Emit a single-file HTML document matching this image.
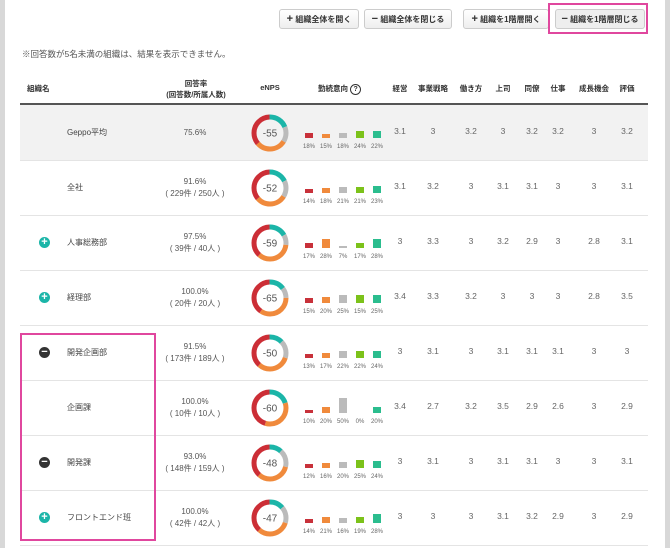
<!DOCTYPE html><html><head><meta charset="utf-8"><style>
body{margin:0;width:670px;height:548px;background:#fff;font-family:"Liberation Sans","Noto Sans CJK JP",sans-serif;color:#555;position:relative;overflow:hidden}
.strip{position:absolute;top:0;bottom:0;width:5px;background:#d8d8d8}
.btn{position:absolute;top:9px;height:18px;border:1px solid #ccc;border-radius:3px;background:linear-gradient(#fff,#eee);font-size:8px;font-weight:bold;color:#333;line-height:18px;text-align:center}
.btn b{font-size:11px}
.abs{position:absolute}
.hd{position:absolute;top:78px;font-size:7.5px;font-weight:bold;color:#333;text-align:center}
.row{position:absolute;left:20px;width:628px;height:55px;border-bottom:1px solid #e4e4e4}
.row>div{position:absolute}
.nm{left:47px;top:22px;font-size:8px;color:#444}
.rt{left:135px;width:80px;text-align:center;font-size:8px;color:#555;line-height:12px}
.dn{left:230px;top:8px}
.v{top:21px;font-size:8.5px;color:#666;text-align:center;width:30px}
.bars{left:281px;top:8px;width:90px;height:40px}
.bars span{position:absolute;width:8px;bottom:15px}
.bars i{position:absolute;bottom:3px;font-style:normal;font-size:6px;color:#666;width:16px;text-align:center}
.ic{left:19px;top:22px;width:11px;height:11px;border-radius:50%;color:#fff;font-size:11px;line-height:10px;text-align:center;font-weight:bold}
</style></head><body>
<div class="strip" style="left:0"></div><div class="strip" style="right:0"></div>
<div class="btn" style="left:279px;width:78px"><b>+</b> 組織全体を開く</div>
<div class="btn" style="left:364px;width:86px"><b>−</b> 組織全体を閉じる</div>
<div class="btn" style="left:463px;width:84px"><b>+</b> 組織を1階層開く</div>
<div class="btn" style="left:555px;width:88px;background:#eee"><b>−</b> 組織を1階層閉じる</div>
<div class="abs" style="left:548px;top:3px;width:100px;height:31px;border:2px solid #e0479e;box-sizing:border-box"></div>
<div class="abs" style="left:22px;top:48px;font-size:8.5px;color:#555">※回答数が5名未満の組織は、結果を表示できません。</div>
<div class="hd" style="left:27px;top:83px">組織名</div>
<div class="hd" style="left:165px;width:62px;line-height:11px">回答率<br>(回答数/所属人数)</div>
<div class="hd" style="left:255px;width:30px;top:83px">eNPS</div>
<div class="hd" style="left:318px;top:83px">勤続意向 <span style="display:inline-block;width:9px;height:9px;border:1px solid #333;border-radius:50%;line-height:9px;font-size:7px">?</span></div>
<div class="hd" style="left:385px;width:30px;top:83px">経営</div>
<div class="hd" style="left:413px;width:40px;top:83px">事業戦略</div>
<div class="hd" style="left:456px;width:30px;top:83px">働き方</div>
<div class="hd" style="left:488px;width:30px;top:83px">上司</div>
<div class="hd" style="left:517px;width:30px;top:83px">同僚</div>
<div class="hd" style="left:543px;width:30px;top:83px">仕事</div>
<div class="hd" style="left:574px;width:40px;top:83px">成長機会</div>
<div class="hd" style="left:612px;width:30px;top:83px">評価</div>
<div class="abs" style="left:20px;top:103px;width:628px;height:2px;background:#555"></div>

<!-- donut template via svg -->
<div class="row" style="top:105px;height:55px;background:#f2f2f2">
<div class="nm" style="top:22px">Geppo平均</div><div class="rt" style="top:22px">75.6%</div>
<div class="dn"><svg width="40" height="40" viewBox="0 0 40 40"><g transform="rotate(-90 20 20)" fill="none" stroke-width="5"><circle cx="20" cy="20" r="16" pathLength="100" stroke="#1bb5a8" stroke-dasharray="19 81"/><circle cx="20" cy="20" r="16" pathLength="100" stroke="#bbb" stroke-dasharray="0 19 15 66"/><circle cx="20" cy="20" r="16" pathLength="100" stroke="#f08a3c" stroke-dasharray="0 34 30 36"/><circle cx="20" cy="20" r="16" pathLength="100" stroke="#cc2e36" stroke-dasharray="0 64 36 0"/></g><text x="20" y="23.5" font-size="10" text-anchor="middle" fill="#555" font-family="Liberation Sans">-55</text></svg></div>
<div class="bars"><span style="left:4px;height:5px;background:#c8313a"></span><span style="left:21px;height:4px;background:#f08a3c"></span><span style="left:38px;height:5px;background:#bbb"></span><span style="left:55px;height:7px;background:#7cc21a"></span><span style="left:72px;height:7px;background:#2bbd8e"></span><i style="left:0">18%</i><i style="left:17px">15%</i><i style="left:34px">18%</i><i style="left:51px">24%</i><i style="left:68px">22%</i></div>
<div class="v" style="left:365px">3.1</div><div class="v" style="left:398px">3</div><div class="v" style="left:436px">3.2</div><div class="v" style="left:468px">3</div><div class="v" style="left:497px">3.2</div><div class="v" style="left:523px">3.2</div><div class="v" style="left:559px">3</div><div class="v" style="left:592px">3.2</div>
</div>

<div class="row" style="top:160px">
<div class="nm">全社</div><div class="rt" style="top:16px">91.6%<br>( 229件 / 250人 )</div>
<div class="dn"><svg width="40" height="40" viewBox="0 0 40 40"><g transform="rotate(-90 20 20)" fill="none" stroke-width="5"><circle cx="20" cy="20" r="16" pathLength="100" stroke="#1bb5a8" stroke-dasharray="18 82"/><circle cx="20" cy="20" r="16" pathLength="100" stroke="#bbb" stroke-dasharray="0 18 16 66"/><circle cx="20" cy="20" r="16" pathLength="100" stroke="#f08a3c" stroke-dasharray="0 34 30 36"/><circle cx="20" cy="20" r="16" pathLength="100" stroke="#cc2e36" stroke-dasharray="0 64 36 0"/></g><text x="20" y="23.5" font-size="10" text-anchor="middle" fill="#555" font-family="Liberation Sans">-52</text></svg></div>
<div class="bars"><span style="left:4px;height:4px;background:#c8313a"></span><span style="left:21px;height:5px;background:#f08a3c"></span><span style="left:38px;height:6px;background:#bbb"></span><span style="left:55px;height:6px;background:#7cc21a"></span><span style="left:72px;height:7px;background:#2bbd8e"></span><i style="left:0">14%</i><i style="left:17px">18%</i><i style="left:34px">21%</i><i style="left:51px">21%</i><i style="left:68px">23%</i></div>
<div class="v" style="left:365px">3.1</div><div class="v" style="left:398px">3.2</div><div class="v" style="left:436px">3</div><div class="v" style="left:468px">3.1</div><div class="v" style="left:497px">3.1</div><div class="v" style="left:523px">3</div><div class="v" style="left:559px">3</div><div class="v" style="left:592px">3.1</div>
</div>

<div class="row" style="top:215px">
<div class="ic" style="background:#1bb5a8">+</div><div class="nm">人事総務部</div><div class="rt" style="top:16px">97.5%<br>( 39件 / 40人 )</div>
<div class="dn"><svg width="40" height="40" viewBox="0 0 40 40"><g transform="rotate(-90 20 20)" fill="none" stroke-width="5"><circle cx="20" cy="20" r="16" pathLength="100" stroke="#1bb5a8" stroke-dasharray="17 83"/><circle cx="20" cy="20" r="16" pathLength="100" stroke="#bbb" stroke-dasharray="0 17 10 73"/><circle cx="20" cy="20" r="16" pathLength="100" stroke="#f08a3c" stroke-dasharray="0 27 35 38"/><circle cx="20" cy="20" r="16" pathLength="100" stroke="#cc2e36" stroke-dasharray="0 62 38 0"/></g><text x="20" y="23.5" font-size="10" text-anchor="middle" fill="#555" font-family="Liberation Sans">-59</text></svg></div>
<div class="bars"><span style="left:4px;height:5px;background:#c8313a"></span><span style="left:21px;height:9px;background:#f08a3c"></span><span style="left:38px;height:2px;background:#bbb"></span><span style="left:55px;height:5px;background:#7cc21a"></span><span style="left:72px;height:9px;background:#2bbd8e"></span><i style="left:0">17%</i><i style="left:17px">28%</i><i style="left:34px">7%</i><i style="left:51px">17%</i><i style="left:68px">28%</i></div>
<div class="v" style="left:365px">3</div><div class="v" style="left:398px">3.3</div><div class="v" style="left:436px">3</div><div class="v" style="left:468px">3.2</div><div class="v" style="left:497px">2.9</div><div class="v" style="left:523px">3</div><div class="v" style="left:559px">2.8</div><div class="v" style="left:592px">3.1</div>
</div>

<div class="row" style="top:270px">
<div class="ic" style="background:#1bb5a8">+</div><div class="nm">経理部</div><div class="rt" style="top:16px">100.0%<br>( 20件 / 20人 )</div>
<div class="dn"><svg width="40" height="40" viewBox="0 0 40 40"><g transform="rotate(-90 20 20)" fill="none" stroke-width="5"><circle cx="20" cy="20" r="16" pathLength="100" stroke="#1bb5a8" stroke-dasharray="15 85"/><circle cx="20" cy="20" r="16" pathLength="100" stroke="#bbb" stroke-dasharray="0 15 10 75"/><circle cx="20" cy="20" r="16" pathLength="100" stroke="#f08a3c" stroke-dasharray="0 25 35 40"/><circle cx="20" cy="20" r="16" pathLength="100" stroke="#cc2e36" stroke-dasharray="0 60 40 0"/></g><text x="20" y="23.5" font-size="10" text-anchor="middle" fill="#555" font-family="Liberation Sans">-65</text></svg></div>
<div class="bars"><span style="left:4px;height:5px;background:#c8313a"></span><span style="left:21px;height:6px;background:#f08a3c"></span><span style="left:38px;height:8px;background:#bbb"></span><span style="left:55px;height:8px;background:#7cc21a"></span><span style="left:72px;height:8px;background:#2bbd8e"></span><i style="left:0">15%</i><i style="left:17px">20%</i><i style="left:34px">25%</i><i style="left:51px">15%</i><i style="left:68px">25%</i></div>
<div class="v" style="left:365px">3.4</div><div class="v" style="left:398px">3.3</div><div class="v" style="left:436px">3.2</div><div class="v" style="left:468px">3</div><div class="v" style="left:497px">3</div><div class="v" style="left:523px">3</div><div class="v" style="left:559px">2.8</div><div class="v" style="left:592px">3.5</div>
</div>

<div class="row" style="top:325px">
<div class="ic" style="background:#333">−</div><div class="nm">開発企画部</div><div class="rt" style="top:16px">91.5%<br>( 173件 / 189人 )</div>
<div class="dn"><svg width="40" height="40" viewBox="0 0 40 40"><g transform="rotate(-90 20 20)" fill="none" stroke-width="5"><circle cx="20" cy="20" r="16" pathLength="100" stroke="#1bb5a8" stroke-dasharray="13 87"/><circle cx="20" cy="20" r="16" pathLength="100" stroke="#bbb" stroke-dasharray="0 13 17 70"/><circle cx="20" cy="20" r="16" pathLength="100" stroke="#f08a3c" stroke-dasharray="0 30 32 38"/><circle cx="20" cy="20" r="16" pathLength="100" stroke="#cc2e36" stroke-dasharray="0 62 38 0"/></g><text x="20" y="23.5" font-size="10" text-anchor="middle" fill="#555" font-family="Liberation Sans">-50</text></svg></div>
<div class="bars"><span style="left:4px;height:4px;background:#c8313a"></span><span style="left:21px;height:5px;background:#f08a3c"></span><span style="left:38px;height:7px;background:#bbb"></span><span style="left:55px;height:7px;background:#7cc21a"></span><span style="left:72px;height:7px;background:#2bbd8e"></span><i style="left:0">13%</i><i style="left:17px">17%</i><i style="left:34px">22%</i><i style="left:51px">22%</i><i style="left:68px">24%</i></div>
<div class="v" style="left:365px">3</div><div class="v" style="left:398px">3.1</div><div class="v" style="left:436px">3</div><div class="v" style="left:468px">3.1</div><div class="v" style="left:497px">3.1</div><div class="v" style="left:523px">3.1</div><div class="v" style="left:559px">3</div><div class="v" style="left:592px">3</div>
</div>

<div class="row" style="top:380px">
<div class="nm">企画課</div><div class="rt" style="top:16px">100.0%<br>( 10件 / 10人 )</div>
<div class="dn"><svg width="40" height="40" viewBox="0 0 40 40"><g transform="rotate(-90 20 20)" fill="none" stroke-width="5"><circle cx="20" cy="20" r="16" pathLength="100" stroke="#1bb5a8" stroke-dasharray="20 80"/><circle cx="20" cy="20" r="16" pathLength="100" stroke="#f08a3c" stroke-dasharray="0 20 35 45"/><circle cx="20" cy="20" r="16" pathLength="100" stroke="#cc2e36" stroke-dasharray="0 55 45 0"/></g><text x="20" y="23.5" font-size="10" text-anchor="middle" fill="#555" font-family="Liberation Sans">-60</text></svg></div>
<div class="bars"><span style="left:4px;height:3px;background:#c8313a"></span><span style="left:21px;height:6px;background:#f08a3c"></span><span style="left:38px;height:15px;background:#bbb"></span><span style="left:72px;height:6px;background:#2bbd8e"></span><i style="left:0">10%</i><i style="left:17px">20%</i><i style="left:34px">50%</i><i style="left:51px">0%</i><i style="left:68px">20%</i></div>
<div class="v" style="left:365px">3.4</div><div class="v" style="left:398px">2.7</div><div class="v" style="left:436px">3.2</div><div class="v" style="left:468px">3.5</div><div class="v" style="left:497px">2.9</div><div class="v" style="left:523px">2.6</div><div class="v" style="left:559px">3</div><div class="v" style="left:592px">2.9</div>
</div>

<div class="row" style="top:435px">
<div class="ic" style="background:#333">−</div><div class="nm">開発課</div><div class="rt" style="top:16px">93.0%<br>( 148件 / 159人 )</div>
<div class="dn"><svg width="40" height="40" viewBox="0 0 40 40"><g transform="rotate(-90 20 20)" fill="none" stroke-width="5"><circle cx="20" cy="20" r="16" pathLength="100" stroke="#1bb5a8" stroke-dasharray="12 88"/><circle cx="20" cy="20" r="16" pathLength="100" stroke="#bbb" stroke-dasharray="0 12 17 71"/><circle cx="20" cy="20" r="16" pathLength="100" stroke="#f08a3c" stroke-dasharray="0 29 33 38"/><circle cx="20" cy="20" r="16" pathLength="100" stroke="#cc2e36" stroke-dasharray="0 62 38 0"/></g><text x="20" y="23.5" font-size="10" text-anchor="middle" fill="#555" font-family="Liberation Sans">-48</text></svg></div>
<div class="bars"><span style="left:4px;height:4px;background:#c8313a"></span><span style="left:21px;height:5px;background:#f08a3c"></span><span style="left:38px;height:6px;background:#bbb"></span><span style="left:55px;height:8px;background:#7cc21a"></span><span style="left:72px;height:7px;background:#2bbd8e"></span><i style="left:0">12%</i><i style="left:17px">16%</i><i style="left:34px">20%</i><i style="left:51px">25%</i><i style="left:68px">24%</i></div>
<div class="v" style="left:365px">3</div><div class="v" style="left:398px">3.1</div><div class="v" style="left:436px">3</div><div class="v" style="left:468px">3.1</div><div class="v" style="left:497px">3.1</div><div class="v" style="left:523px">3</div><div class="v" style="left:559px">3</div><div class="v" style="left:592px">3.1</div>
</div>

<div class="row" style="top:490px">
<div class="ic" style="background:#1bb5a8">+</div><div class="nm">フロントエンド班</div><div class="rt" style="top:16px">100.0%<br>( 42件 / 42人 )</div>
<div class="dn"><svg width="40" height="40" viewBox="0 0 40 40"><g transform="rotate(-90 20 20)" fill="none" stroke-width="5"><circle cx="20" cy="20" r="16" pathLength="100" stroke="#1bb5a8" stroke-dasharray="14 86"/><circle cx="20" cy="20" r="16" pathLength="100" stroke="#bbb" stroke-dasharray="0 14 16 70"/><circle cx="20" cy="20" r="16" pathLength="100" stroke="#f08a3c" stroke-dasharray="0 30 32 38"/><circle cx="20" cy="20" r="16" pathLength="100" stroke="#cc2e36" stroke-dasharray="0 62 38 0"/></g><text x="20" y="23.5" font-size="10" text-anchor="middle" fill="#555" font-family="Liberation Sans">-47</text></svg></div>
<div class="bars"><span style="left:4px;height:4px;background:#c8313a"></span><span style="left:21px;height:6px;background:#f08a3c"></span><span style="left:38px;height:5px;background:#bbb"></span><span style="left:55px;height:6px;background:#7cc21a"></span><span style="left:72px;height:9px;background:#2bbd8e"></span><i style="left:0">14%</i><i style="left:17px">21%</i><i style="left:34px">16%</i><i style="left:51px">19%</i><i style="left:68px">28%</i></div>
<div class="v" style="left:365px">3</div><div class="v" style="left:398px">3</div><div class="v" style="left:436px">3</div><div class="v" style="left:468px">3.1</div><div class="v" style="left:497px">3.2</div><div class="v" style="left:523px">2.9</div><div class="v" style="left:559px">3</div><div class="v" style="left:592px">2.9</div>
</div>

<div class="abs" style="left:20px;top:333px;width:136px;height:208px;border:2px solid #e0479e;box-sizing:border-box"></div>
</body></html>
